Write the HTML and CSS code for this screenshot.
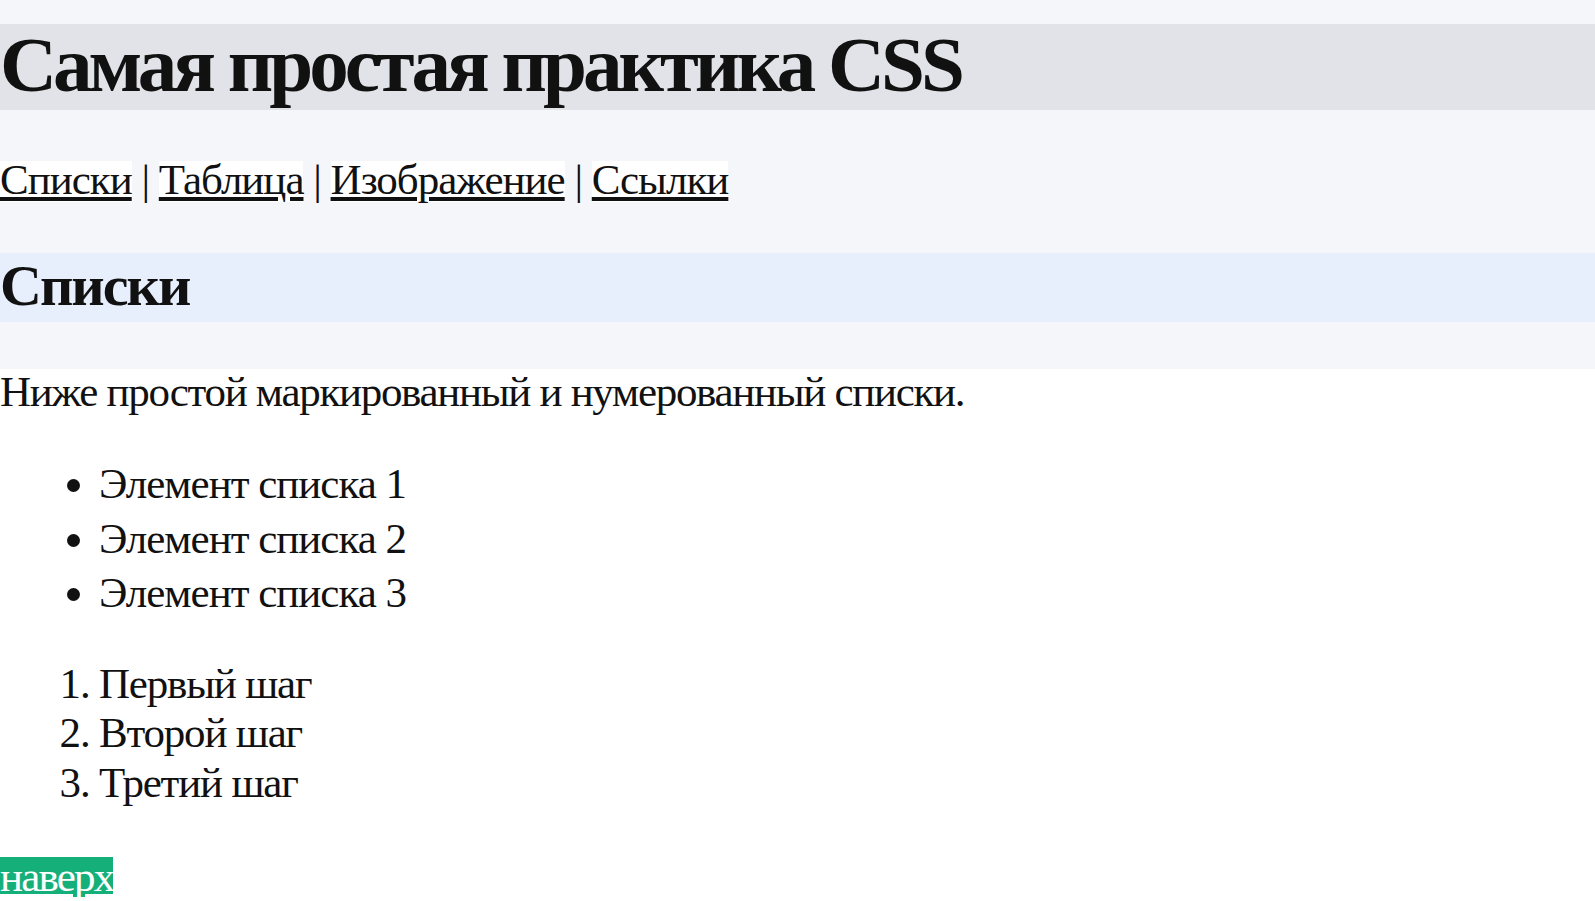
FILE: index.html
```html
<!DOCTYPE html>
<html lang="ru">
<head>
<meta charset="utf-8">
<title>Самая простая практика CSS</title>
<link rel="stylesheet" href="styles.css">
</head>
<body>
<header class="top" id="top">
  <h1 class="title">Самая простая практика CSS</h1>
  <nav class="nav">
    <a class="nav-link" href="#lists">Списки</a> | <a class="nav-link" href="#table">Таблица</a> | <a class="nav-link" href="#image">Изображение</a> | <a class="nav-link" href="#links">Ссылки</a>
  </nav>
  <h2 class="section-title" id="lists">Списки</h2>
</header>
<main class="content">
  <p class="intro">Ниже простой маркированный и нумерованный списки.</p>
  <ul class="bullets">
    <li>Элемент списка 1</li>
    <li>Элемент списка 2</li>
    <li>Элемент списка 3</li>
  </ul>
  <ol class="steps">
    <li>Первый шаг</li>
    <li>Второй шаг</li>
    <li>Третий шаг</li>
  </ol>
  <a class="to-top" href="#top">наверх</a>
</main>
</body>
</html>
```
FILE: styles.css
```css
html, body {
  margin: 0;
  padding: 0;
  background: #ffffff;
  color: #111111;
  font-family: "Liberation Serif", "Times New Roman", serif;
  font-size: 43px;
}

.top {
  background: #f5f6fa;
  padding-top: 24px;
  height: 345px;
}

.title {
  margin: 0;
  background: #e2e3e8;
  height: 86px;
  font-size: 79px;
  line-height: 82px;
  font-weight: bold;
  letter-spacing: -4px;
  white-space: nowrap;
}

.nav {
  margin-top: 51px;
  height: 41px;
  line-height: 38px;
  letter-spacing: -1px;
}

.nav-link {
  display: inline-block;
  line-height: 38px;
  padding-bottom: 3px;
  background: #ffffff;
  color: #111111;
  text-decoration: underline;
}

.section-title {
  margin: 51px 0 0 0;
  background: #e8effc;
  height: 69px;
  line-height: 66px;
  font-size: 58px;
  font-weight: bold;
  letter-spacing: -2px;
}

.content {
  display: flex;
  flex-direction: column;
  align-items: flex-start;
}

.intro {
  margin: 0;
  line-height: 46px;
  letter-spacing: -1.3px;
}

.bullets {
  margin: 42px 0 0 0;
  padding-left: 99px;
  letter-spacing: -1px;
}

.bullets li {
  line-height: 54.5px;
}

.steps {
  margin: 38px 0 0 0;
  padding-left: 99px;
  letter-spacing: -1.2px;
}

.steps li {
  line-height: 49.5px;
}

.to-top {
  margin-top: 50px;
  background: #15b07a;
  color: #ffffff;
  text-decoration: underline;
  line-height: 40px;
  letter-spacing: -1.8px;
}
```
